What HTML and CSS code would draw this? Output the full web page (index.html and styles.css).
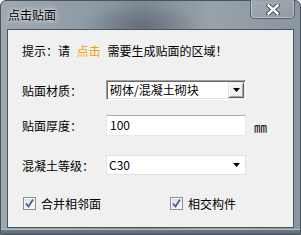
FILE: index.html
```html
<!DOCTYPE html>
<html>
<head>
<meta charset="utf-8">
<link rel="stylesheet" href="styles.css">
</head>
<body>
<div class="window">
  <div class="titlebar">
    <span class="title">点击贴面</span>
    <div class="close">
      <svg width="14" height="11" viewBox="0 0 14 11">
        <path d="M2.5 1.5 L11.5 9.5 M11.5 1.5 L2.5 9.5" stroke="#3a434b" stroke-width="4.2" stroke-linecap="square" fill="none"/>
        <path d="M2.5 1.5 L11.5 9.5 M11.5 1.5 L2.5 9.5" stroke="#ffffff" stroke-width="2.4" stroke-linecap="square" fill="none"/>
      </svg>
    </div>
  </div>
  <div class="client">
    <div class="hint">提示：请 <span class="hl">点击</span> 需要生成贴面的区域！</div>
    <div class="row r1">
      <span class="lbl">贴面材质：</span>
      <div class="combo classic">
        <span class="val">砌体/混凝土砌块</span>
        <span class="btn"><svg width="7" height="4" viewBox="0 0 7 4"><path d="M0 0 H7 L3.5 4 Z" fill="#000"/></svg></span>
      </div>
    </div>
    <div class="row r2">
      <span class="lbl">贴面厚度：</span>
      <div class="edit">100</div>
      <span class="unit">㎜</span>
    </div>
    <div class="row r3">
      <span class="lbl">混凝土等级：</span>
      <div class="combo flat">
        <span class="val">C30</span>
        <svg class="arrow" width="7" height="4" viewBox="0 0 7 4"><path d="M0 0 H7 L3.5 4 Z" fill="#000"/></svg>
      </div>
    </div>
    <div class="checks">
      <span class="chk c1">
        <span class="box"><svg width="11" height="11" viewBox="0 0 11 11"><path d="M2 5.5 L4.5 8.5 L9 1.5" stroke="#4a5e9c" stroke-width="1.8" fill="none"/></svg></span>合并相邻面
      </span>
      <span class="chk c2">
        <span class="box"><svg width="11" height="11" viewBox="0 0 11 11"><path d="M2 5.5 L4.5 8.5 L9 1.5" stroke="#4a5e9c" stroke-width="1.8" fill="none"/></svg></span>相交构件
      </span>
    </div>
  </div>
</div>
</body>
</html>
```

FILE: styles.css
```css
html, body {
  margin: 0;
  padding: 0;
  background: #ffffff;
}
body {
  font-family: "Noto Sans CJK SC", "DejaVu Sans", sans-serif;
  font-size: 12px;
  color: #000;
}
.window {
  width: 301px;
  height: 235px;
  box-sizing: border-box;
  border: 1px solid #4a545d;
  border-radius: 6px 6px 0 0;
  background:
    linear-gradient(to bottom, rgba(0,0,0,0) 228px, #b4bdc4 228px, #b4bdc4 229px, #6b7782 229px, #5e6a74 233px),
    radial-gradient(ellipse 60px 22px at 140px 25px, rgba(70,80,90,0.45), rgba(70,80,90,0) 100%),
    linear-gradient(to right, #9ea8b0 0%, #8e9aa4 30%, #7c8893 48%, #98a2aa 70%, #8995a0 100%);
  background-color: #8b97a1;
  display: flex;
  flex-direction: column;
}
.titlebar {
  height: 28px;
  display: flex;
  justify-content: space-between;
  align-items: flex-start;
  padding-left: 7px;
}
.title {
  margin-top: 6px;
  line-height: 16px;
  font-size: 12px;
  color: #000;
  text-shadow: 0 0 6px rgba(255,255,255,0.9), 0 0 3px rgba(255,255,255,0.8);
}
.close {
  width: 45px;
  height: 19px;
  margin-right: 5px;
  margin-top: -1px;
  box-sizing: border-box;
  border: 1px solid #56616b;
  border-top: none;
  border-radius: 0 0 5px 5px;
  box-shadow: inset 0 0 0 1px rgba(255,255,255,0.35);
  background: linear-gradient(to bottom, rgba(255,255,255,0.15), rgba(255,255,255,0.05));
  display: flex;
  align-items: center;
  justify-content: center;
}
.client {
  margin: 0 6px 0 6px;
  height: 199px;
  box-sizing: border-box;
  border: 1px solid #4b555e;
  background: #f0f0f0;
  display: flex;
  flex-direction: column;
  padding-left: 14px;
}
.hint {
  margin-top: 11px;
  height: 20px;
  line-height: 20px;
}
.hl {
  color: #f5a100;
  margin: 0 4px;
}
.row {
  display: flex;
  align-items: center;
}
.r1 { margin-top: 19px; height: 20px; }
.r2 { margin-top: 15px; height: 21px; }
.r3 { margin-top: 19px; height: 20px; }
.lbl {
  width: 84px;
  flex: none;
}
.combo {
  width: 140px;
  height: 20px;
  box-sizing: border-box;
  display: flex;
  align-items: center;
  background: #fff;
}
.combo.classic {
  border-top: 1px solid #a0a0a0;
  border-left: 1px solid #a0a0a0;
  border-right: 1px solid #ffffff;
  border-bottom: 1px solid #ffffff;
  box-shadow: inset 1px 1px 0 #696969, inset -1px -1px 0 #e3e3e3;
  padding: 0 1px 0 3px;
}
.combo .val {
  flex: 1;
  line-height: 16px;
}
.btn {
  width: 16px;
  height: 16px;
  box-sizing: border-box;
  background: #f0f0f0;
  border-top: 1px solid #e3e3e3;
  border-left: 1px solid #e3e3e3;
  border-right: 1px solid #696969;
  border-bottom: 1px solid #696969;
  box-shadow: inset 1px 1px 0 #ffffff, inset -1px -1px 0 #a0a0a0;
  display: flex;
  align-items: center;
  justify-content: center;
}
.combo.flat {
  border: 1px solid #e2e2e2;
  padding: 0 5px 0 2px;
}
.edit {
  width: 140px;
  height: 21px;
  box-sizing: border-box;
  background: #fff;
  border: 1px solid #e3e9ef;
  border-top-color: #abadb3;
  padding-left: 3px;
  line-height: 18px;
}
.unit {
  margin-left: 8px;
  font-size: 13px;
  margin-top: 2px;
}
.checks {
  margin-top: 18px;
  height: 20px;
  display: flex;
  align-items: center;
}
.chk {
  display: flex;
  align-items: center;
}
.c1 { margin-left: 1px; width: 147px; }
.box {
  width: 13px;
  height: 13px;
  box-sizing: border-box;
  border: 1px solid #8e8f8f;
  background: linear-gradient(135deg, #dcdcdc, #fbfbfb);
  box-shadow: inset 0 0 0 1px #f4f4f4;
  margin-right: 5px;
  display: flex;
  align-items: center;
  justify-content: center;
}
```
